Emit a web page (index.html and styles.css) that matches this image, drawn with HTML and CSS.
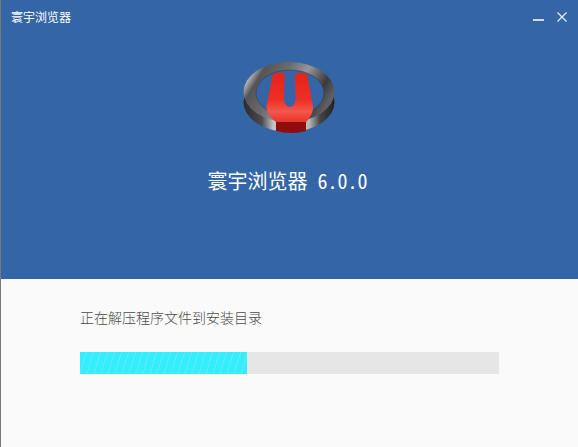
FILE: index.html
```html
<!DOCTYPE html>
<html lang="zh-CN">

<head>
    <meta charset="UTF-8" />
    <title>寰宇浏览器</title>
    <link rel="stylesheet" href="styles.css">
</head>

<body>
    <div class="window">
        <div class="top">
            <div class="titlebar">
                <span class="app-name">寰宇浏览器</span>
                <div class="win-btns">
                    <svg class="win-icon" width="12" height="12" viewBox="0 0 12 12">
                        <rect x="0" y="8" width="11" height="2" fill="#cfdcec" />
                    </svg>
                    <svg class="win-icon" width="12" height="12" viewBox="0 0 12 12">
                        <path d="M1.5 1.5L10.500 10.500M10.500 1.500L1.500 10.500" stroke="#e8eef6" stroke-width="1.2" fill="none" />
                    </svg>
                </div>
            </div>

            <!-- logo: dark metal ring with red U -->
            <svg class="logo" width="94" height="76" viewBox="0 0 94 76">
                <defs>
                    <linearGradient id="ring" x1="0" y1="0.1" x2="1" y2="0.5">
                        <stop offset="0" stop-color="#4a4a4c" />
                        <stop offset="0.09" stop-color="#c8c8c8" />
                        <stop offset="0.2" stop-color="#555558" />
                        <stop offset="0.42" stop-color="#6a6b6e" />
                        <stop offset="0.62" stop-color="#96969a" />
                        <stop offset="0.86" stop-color="#3a3a3d" />
                        <stop offset="1" stop-color="#606063" />
                    </linearGradient>
                    <linearGradient id="side" x1="0" y1="0" x2="1" y2="0">
                        <stop offset="0" stop-color="#2a2a2c" />
                        <stop offset="0.2" stop-color="#4a4a4c" />
                        <stop offset="0.33" stop-color="#c4c4c4" />
                        <stop offset="0.72" stop-color="#b8b8b8" />
                        <stop offset="0.84" stop-color="#454547" />
                        <stop offset="1" stop-color="#222224" />
                    </linearGradient>
                    <linearGradient id="red" x1="0" y1="0" x2="0" y2="1">
                        <stop offset="0" stop-color="#e5241c" />
                        <stop offset="0.55" stop-color="#ee2f25" />
                        <stop offset="0.78" stop-color="#f4574c" />
                        <stop offset="1" stop-color="#e8352b" />
                    </linearGradient>
                    <filter id="soft">
                        <feGaussianBlur stdDeviation="0.4" />
                    </filter>
                </defs>
                <g filter="url(#soft)">
                    <ellipse cx="47" cy="40" rx="45.500" ry="30" fill="url(#side)" />
                    <ellipse cx="47" cy="30" rx="45.500" ry="30" fill="url(#ring)" />
                    <ellipse cx="48" cy="31" rx="34" ry="23" fill="#3465a6" stroke="#3d3d40" stroke-opacity="0.6" stroke-width="1" />
                    <path fill="#8f0a08" d="M34 56H64V69Q49 73 34 69Z" />
                    <path fill="url(#red)"
                        d="M33 11H41C42 11 42.700 12 42.700 13L42 37C42 41 45 45 48 45C51 45 53.500 41 53.500 37L53 13C53 12 54 11 55 11H63C64 11 65 12 65.300 14L71 44C71.500 50 68 56 64 60H34C29 56 24 50 24.500 44L30.500 14C31 12 32 11 33 11Z" />
                </g>
            </svg>

            <div class="product">寰宇浏览器<span class="version">6.0.0</span></div>
        </div>

        <div class="bottom">
            <div class="status">正在解压程序文件到安装目录</div>
            <div class="progress">
                <div class="progress-fill" style="width: 167px"></div>
            </div>
        </div>
    </div>
</body>

</html>
```

FILE: styles.css
```css
* {
    box-sizing: border-box;
}

html,
body {
    margin: 0;
    padding: 0;
}

.window {
    width: 578px;
    height: 447px;
    display: flex;
    flex-direction: column;
    background-color: #fafafa;
    font-family: "Noto Sans CJK SC", "Liberation Sans", sans-serif;
    border-left: 1px solid #7a7a7a;
}

.top {
    height: 279px;
    background-color: #3465a6;
    color: white;
    display: flex;
    flex-direction: column;
    align-items: center;
}

.titlebar {
    width: 100%;
    height: 62px;
    display: flex;
    justify-content: space-between;
    align-items: flex-start;
    padding: 9px 10px 0 10px;
}

.app-name {
    font-size: 12px;
    line-height: 16px;
}

.win-btns {
    display: flex;
    gap: 11px;
    padding-top: 2px;
}

.win-icon {
    display: block;
}

.logo {
    display: block;
    margin-left: -1px;
}

.product {
    margin-top: 30px;
    padding-right: 4px;
    font-size: 20px;
    line-height: 26px;
    white-space: nowrap;
}

.version {
    margin-left: 10px;
    font-feature-settings: "hwid";
}

.bottom {
    flex: 1;
    padding: 28px 0 0 79px;
}

.status {
    font-size: 14px;
    line-height: 20px;
    font-weight: 300;
    color: #4a4a4a;
}

.progress {
    margin-top: 25px;
    width: 419px;
    height: 22px;
    background-color: #e6e6e6;
}

.progress-fill {
    height: 100%;
    background-color: #33eeff;
    background-image: repeating-linear-gradient(107deg, #33eeff 0, #33eeff 5.700px, #62e9f6 5.700px, #62e9f6 6.700px);
}
```
